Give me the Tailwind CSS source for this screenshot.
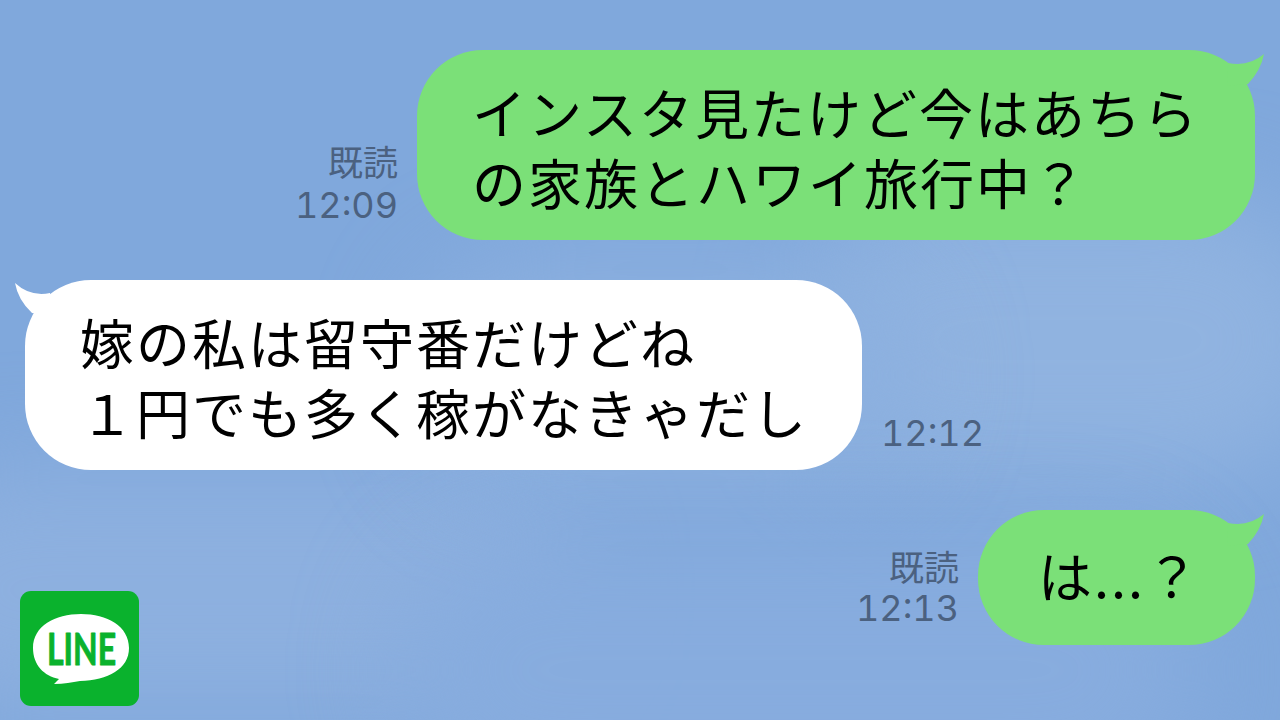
<!DOCTYPE html>
<html lang="ja">
<head>
<meta charset="UTF-8">
<title>LINE</title>
<script src="https://cdn.jsdelivr.net/npm/@tailwindcss/browser@4"></script>
</head>
<body class="m-0">
<div class="relative w-[1280px] h-[720px] overflow-hidden bg-[#80a8dc] font-['Noto_Sans_CJK_JP','Noto_Sans_CJK_SC',sans-serif] text-black">

  <!-- clouds -->
  <div class="absolute left-[800px] top-[200px] w-[540px] h-[280px] rounded-full bg-[#90b3e0] blur-[50px]"></div>
  <div class="absolute left-[-120px] top-[470px] w-[700px] h-[240px] rounded-full bg-[#8db0df] blur-[50px]"></div>
  <div class="absolute left-[420px] top-[260px] w-[500px] h-[230px] rounded-full bg-[#8cb0df] blur-[50px]"></div>
  <div class="absolute left-[400px] top-[540px] w-[800px] h-[260px] rounded-full bg-[#87acde] blur-[50px]"></div>

  <div class="relative flex flex-col pt-[50px] pr-[25px] pl-[25px]">

    <!-- row 1 -->
    <div class="flex justify-end items-end gap-[19px] h-[190px]">
      <div class="flex flex-col items-end pb-[13px] text-[#4b6180]">
        <span class="text-[35px] leading-[43px]">既読</span>
        <span class="mt-[2px] text-[36px] leading-[43px] font-['Inter',sans-serif] tabular-nums">12:09</span>
      </div>
      <div class="relative w-[838px] h-[190px] rounded-[66px] bg-[#7be078] pl-[55px] pt-[27px] text-[54px] leading-[70px] tracking-[2px]">
        <svg class="absolute left-[800px] top-0 w-[50px] h-[50px]" viewBox="0 0 50 50"><path d="M11 13 Q32 17 47 4 Q44 20 31 34 L10 36 Z" fill="#7be078"/></svg>
        <p class="relative">インスタ見たけど今はあちら</p>
        <p class="relative">の家族とハワイ旅行中？</p>
      </div>
    </div>

    <!-- row 2 -->
    <div class="flex items-end gap-[19px] h-[190px] mt-[40px]">
      <div class="relative w-[837px] h-[190px] rounded-[66px] bg-white pl-[55px] pt-[27px] text-[54px] leading-[70px] tracking-[2px]">
        <svg class="absolute left-[-12px] top-0 w-[50px] h-[50px]" viewBox="0 0 50 50"><path d="M37 13 Q17 17 2 3 Q5 20 19 33 L40 36 Z" fill="#fff"/></svg>
        <p class="relative">嫁の私は留守番だけどね</p>
        <p class="relative">１円でも多く稼がなきゃだし</p>
      </div>
      <span class="pb-[15px] text-[#4b6180] text-[36px] leading-[43px] font-['Inter',sans-serif] tabular-nums">12:12</span>
    </div>

    <!-- row 3 -->
    <div class="flex justify-end items-end gap-[19px] h-[135px] mt-[40px]">
      <div class="flex flex-col items-end pb-[15px] text-[#4b6180]">
        <span class="text-[35px] leading-[43px]">既読</span>
        <span class="text-[36px] leading-[43px] font-['Inter',sans-serif] tabular-nums">12:13</span>
      </div>
      <div class="relative w-[277px] h-[135px] rounded-[66px] bg-[#7be078] pl-[60px] pt-[30px] text-[54px] leading-[70px] tracking-[2px]">
        <svg class="absolute left-[239px] top-0 w-[50px] h-[50px]" viewBox="0 0 50 50"><path d="M11 13 Q32 17 47 4 Q44 20 31 34 L10 36 Z" fill="#7be078"/></svg>
        <p class="relative">は...？</p>
      </div>
    </div>
  </div>

  <!-- LINE logo -->
  <div class="absolute left-[20px] top-[591px] w-[119px] h-[115px] rounded-[11px] bg-[#0ab22d]">
    <svg class="w-full h-full" viewBox="0 0 119 115">
      <path d="M13 57 C13 35 35 23 61 23 C87 23 109 35 109 57 C109 78 88 89 60 90 C52 91 44 93 34 93 L39 88 C24 85 13 74 13 57 Z" fill="#fff"/>
      <text x="27" y="74" font-family="Lato" font-weight="700" font-size="44" fill="#0ab22d" stroke="#0ab22d" stroke-width="1" stroke-linejoin="round" textLength="69" lengthAdjust="spacingAndGlyphs">LINE</text>
    </svg>
  </div>
</div>
</body>
</html>
